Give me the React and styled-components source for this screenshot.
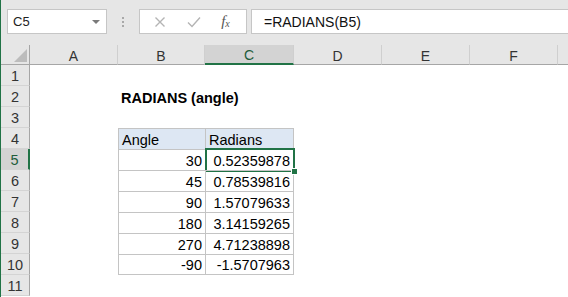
import React from 'react'
import styled, { createGlobalStyle, css } from 'styled-components'

const Global = createGlobalStyle`
  html, body { margin: 0; padding: 0; background: #fff; }
  body { font-family: "Liberation Sans", Arial, sans-serif; }
`

const GREEN = '#217346'

const Window = styled.div`
  width: 568px;
  height: 297px;
  overflow: hidden;
  box-sizing: border-box;
  border-left: 1px solid ${GREEN};
  display: flex;
  flex-direction: column;
  background: #fff;
`

const Toolbar = styled.div`
  height: 45px;
  flex: none;
  box-sizing: border-box;
  background: #e6e6e6;
  display: flex;
  align-items: flex-start;
  padding: 9px 0 0 6px;
`

const Box = styled.div`
  height: 25px;
  box-sizing: border-box;
  background: #fff;
  border: 1px solid #c6c6c6;
  display: flex;
  align-items: center;
`

const NameBox = styled(Box)`
  width: 100px;
  padding: 0 6px 0 5px;
  justify-content: space-between;
  font-size: 13px;
  color: #222;
`

const Caret = styled.span`
  width: 0;
  height: 0;
  border-left: 4px solid transparent;
  border-right: 4px solid transparent;
  border-top: 4px solid #7a7a7a;
`

const Grip = styled.div`
  width: 32px;
  height: 25px;
  display: flex;
  flex-direction: column;
  align-items: center;
  justify-content: center;
  gap: 2px;
  span {
    width: 2px;
    height: 2px;
    background: #a8a8a8;
  }
`

const FxButtons = styled(Box)`
  width: 108px;
  justify-content: space-around;
  padding: 0 6px 0 4px;
  margin-right: 4px;
`

const FxLabel = styled.span`
  font-family: "Liberation Serif", "Times New Roman", serif;
  font-style: italic;
  font-size: 15px;
  color: #555;
  sub { font-size: 10px; vertical-align: -1px; }
`

const Formula = styled(Box)`
  flex: 1;
  margin-right: -2px;
  padding-left: 12px;
  font-size: 14px;
  color: #111;
`

const Sheet = styled.div`
  display: grid;
  grid-template-columns: 29px 88px 87px 89px 88px 88px 88px 40px;
  grid-template-rows: 20px repeat(11, 21px);
  font-size: 14.5px;
`

const ColHead = styled.div`
  position: relative;
  box-sizing: border-box;
  background: ${p => (p.$selected ? '#d3d3d3' : '#e6e6e6')};
  border-bottom: ${p => (p.$selected ? `2px solid ${GREEN}` : '1px solid #a6a6a6')};
  border-right: 1px solid #cfcfcf;
  display: flex;
  align-items: center;
  justify-content: center;
  color: ${p => (p.$selected ? '#1e5c3a' : '#333')};
  font-size: 14px;
  padding-top: 2px;
`

const Corner = styled(ColHead)`
  border-right: 1px solid #a6a6a6;
  justify-content: flex-end;
  align-items: flex-end;
  padding: 0 2px 2px 0;
`

const RowHead = styled.div`
  box-sizing: border-box;
  background: ${p => (p.$selected ? '#d3d3d3' : '#e6e6e6')};
  border-right: ${p => (p.$selected ? `2px solid ${GREEN}` : '1px solid #a6a6a6')};
  border-bottom: 1px solid #d4d4d4;
  display: flex;
  align-items: flex-end;
  justify-content: center;
  padding-bottom: 1px;
  color: ${p => (p.$selected ? '#1e5c3a' : '#333')};
  font-size: 14.5px;
`

const Cell = styled.div`
  position: relative;
  box-sizing: border-box;
  display: flex;
  align-items: flex-end;
  justify-content: ${p => (p.$align === 'right' ? 'flex-end' : 'flex-start')};
  padding: 0 3px 1px 3px;
  white-space: nowrap;
  color: #000;
  font-weight: ${p => (p.$bold ? 700 : 400)};
  background: ${p => p.$fill || 'transparent'};
  ${p =>
    p.$table &&
    css`
      border-top: 1px solid #c4c4c4;
      border-left: 1px solid #c4c4c4;
    `}
  ${p => p.$lastCol && css`border-right: 1px solid #c4c4c4;`}
  ${p => p.$lastRow && css`border-bottom: 1px solid #c4c4c4;`}
  ${p =>
    p.$active &&
    css`
      &::after {
        content: '';
        position: absolute;
        left: -1px;
        top: -2px;
        right: -2px;
        bottom: -2px;
        border: 2px solid ${GREEN};
        pointer-events: none;
      }
      &::before {
        content: '';
        position: absolute;
        right: -5px;
        bottom: -5px;
        width: 5px;
        height: 5px;
        background: ${GREEN};
        border: 1px solid #fff;
        z-index: 2;
      }
    `}
`

const columns = ['A', 'B', 'C', 'D', 'E', 'F', 'G']

const data = [
  [30, '0.52359878'],
  [45, '0.78539816'],
  [90, '1.57079633'],
  [180, '3.14159265'],
  [270, '4.71238898'],
  [-90, '-1.5707963'],
]

const XIcon = () => (
  <svg width="12" height="12" viewBox="0 0 12 12">
    <path d="M1.5 1.5 L10.5 10.5 M10.5 1.5 L1.5 10.5" stroke="#b4b4b4" strokeWidth="1.4" fill="none" />
  </svg>
)

const CheckIcon = () => (
  <svg width="14" height="12" viewBox="0 0 14 12">
    <path d="M1 6.5 L5 10.5 L13 1.5" stroke="#b4b4b4" strokeWidth="1.4" fill="none" />
  </svg>
)

const CornerMark = () => (
  <svg width="13" height="13" viewBox="0 0 13 13">
    <polygon points="13,0 13,13 0,13" fill="#bcbcbc" />
  </svg>
)

function rowCells(r) {
  // row r is 1-based; returns the cells for columns A..G
  const cells = []
  const tableRow = r >= 4 && r <= 10
  for (let c = 0; c < columns.length; c++) {
    const key = `${r}-${c}`
    const inTable = tableRow && (c === 1 || c === 2)
    let text = ''
    let align = 'left'
    let bold = false
    let fill
    if (r === 2 && c === 1) {
      text = 'RADIANS (angle)'
      bold = true
    }
    if (r === 4 && c === 1) text = 'Angle'
    if (r === 4 && c === 2) text = 'Radians'
    if (r === 4 && inTable) fill = '#dde7f3'
    if (r >= 5 && r <= 10 && inTable) {
      const d = data[r - 5]
      text = c === 1 ? d[0] : d[1]
      align = 'right'
    }
    cells.push(
      <Cell
        key={key}
        $align={align}
        $bold={bold}
        $fill={fill}
        $table={inTable}
        $lastCol={inTable && c === 2}
        $lastRow={inTable && r === 10}
        $active={r === 5 && c === 2}
      >
        {text}
      </Cell>
    )
  }
  return cells
}

export default function App() {
  const rows = Array.from({ length: 11 }, (_, i) => i + 1)
  return (
    <>
      <Global />
      <Window>
        <Toolbar>
          <NameBox>
            <span>C5</span>
            <Caret />
          </NameBox>
          <Grip>
            <span />
            <span />
            <span />
          </Grip>
          <FxButtons>
            <XIcon />
            <CheckIcon />
            <FxLabel>
              f<sub>x</sub>
            </FxLabel>
          </FxButtons>
          <Formula>=RADIANS(B5)</Formula>
        </Toolbar>
        <Sheet>
          <Corner>
            <CornerMark />
          </Corner>
          {columns.map(c => (
            <ColHead key={c} $selected={c === 'C'}>
              {c === 'G' ? '' : c}
            </ColHead>
          ))}
          {rows.map(r => (
            <React.Fragment key={r}>
              <RowHead $selected={r === 5}>{r}</RowHead>
              {rowCells(r)}
            </React.Fragment>
          ))}
        </Sheet>
      </Window>
    </>
  )
}
